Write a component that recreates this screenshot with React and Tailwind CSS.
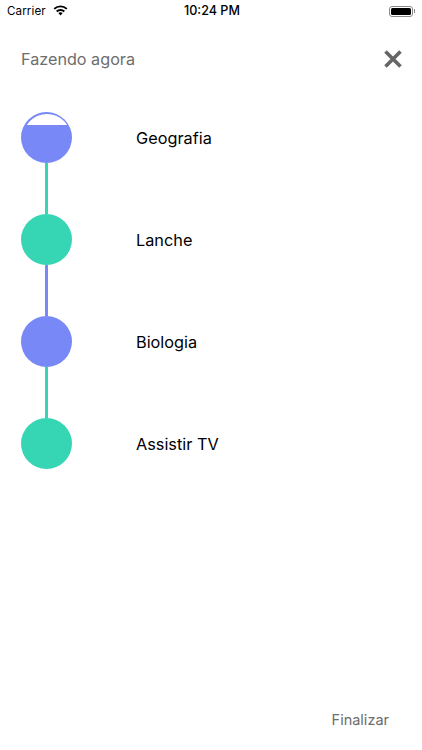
const sans = 'font-["Inter","Liberation_Sans",sans-serif]'

const steps = [
  { name: 'Geografia', dot: 'bg-[#7889f7]', line: 'bg-[#36d6b4]', partial: true },
  { name: 'Lanche', dot: 'bg-[#36d6b4]', line: 'bg-[#7889f7]' },
  { name: 'Biologia', dot: 'bg-[#7889f7]', line: 'bg-[#36d6b4]' },
  { name: 'Assistir TV', dot: 'bg-[#36d6b4]' },
]

function StatusBar() {
  return (
    <div className="relative flex h-[22px] items-center justify-between pl-[7px] pr-[7px] text-black">
      <div className="flex items-center gap-[7px]">
        <span className="pt-[1px] text-[11.6px] tracking-[0.1px]">Carrier</span>
        <svg width="15" height="11" viewBox="0 0 15 11" className="mt-[-1px]">
          <path d="M1.2 3.9a9 9 0 0 1 12.6 0" stroke="#000" strokeWidth="1.9" fill="none" />
          <path d="M3.7 6.5a5.4 5.4 0 0 1 7.6 0" stroke="#000" strokeWidth="1.9" fill="none" />
          <path d="M7.5 7.2c-.9 0-1.6.3-2.2.8l2.2 2.6 2.2-2.6c-.6-.5-1.3-.8-2.2-.8Z" fill="#000" />
        </svg>
      </div>
      <span className="absolute left-[184px] top-[3px] text-[12.6px] font-medium leading-[16px]">10:24 PM</span>
      <div className="flex items-center gap-[1px]">
        <div className="flex h-[11px] w-[24px] items-center rounded-[3px] border border-[#8a8a8a] p-[1px]">
          <div className="h-full w-full rounded-[1.5px] bg-black" />
        </div>
        <div className="h-[4px] w-[1px] bg-[#8a8a8a]" />
      </div>
    </div>
  )
}

export default function App() {
  return (
    <div className={`flex h-[750px] w-[422px] flex-col overflow-hidden bg-white ${sans}`}>
      <StatusBar />
      <div className="flex h-[75px] items-center justify-between pb-[1px] pl-[21px] pr-[19px]">
        <span className="text-[16.2px] text-[#6d6d6d]">Fazendo agora</span>
        <svg width="20" height="20" viewBox="0 0 20 20">
          <path d="M2.5 2.5 17.5 17.5M17.5 2.5 2.5 17.5" stroke="#666" strokeWidth="3.6" fill="none" />
        </svg>
      </div>
      <div className="flex flex-col pl-[21px] pt-[15px]">
        {steps.map((s) => (
          <div key={s.name}>
            <div className="flex h-[51px] items-center">
              <div className={`h-[51px] w-[51px] rounded-full p-[1.5px] ${s.dot}`}>
                {s.partial && (
                  <div className="h-[11px] overflow-hidden">
                    <div className="h-[48px] w-[48px] rounded-full bg-white" />
                  </div>
                )}
              </div>
              <span className="ml-[64px] pt-[1px] text-[16.3px] text-black">{s.name}</span>
            </div>
            {s.line && <div className={`ml-[24px] h-[51px] w-[3px] ${s.line}`} />}
          </div>
        ))}
      </div>
      <div className="mt-auto flex justify-end pb-[19px] pr-[33px]">
        <span className="text-[14.5px] text-[#6d6d6d]">Finalizar</span>
      </div>
    </div>
  )
}
